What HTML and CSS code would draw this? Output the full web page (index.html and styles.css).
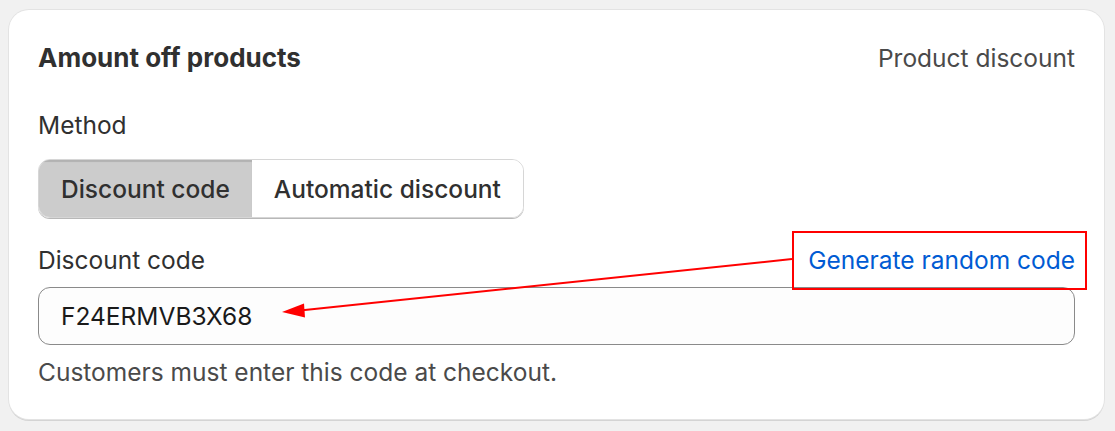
FILE: index.html
```html
<!doctype html>
<html>
<head>
    <meta charset="UTF-8">
    <title>Amount off products</title>
    <link rel="stylesheet" href="styles.css">
</head>
<body>
<div class="page">
    <div class="card">
        <div class="head">
            <h2 class="title">Amount off products</h2>
            <span class="kind">Product discount</span>
        </div>

        <div class="label">Method</div>
        <div class="segmented">
            <button class="seg seg-on">Discount code</button>
            <button class="seg">Automatic discount</button>
        </div>

        <div class="label-row">
            <label class="label" for="code">Discount code</label>
            <a class="link" href="#">Generate random code</a>
        </div>
        <input class="field" id="code" type="text" value="F24ERMVB3X68">
        <div class="help">Customers must enter this code at checkout.</div>
    </div>

    <!-- annotation -->
    <div class="mark"></div>
    <svg class="arrow" viewBox="0 0 1115 431" width="1115" height="431">
        <line x1="792" y1="259" x2="300" y2="310.5" stroke="#ff0000" stroke-width="2"/>
        <polygon points="282,312 304,303.5 305,317.5" fill="#ff0000"/>
    </svg>
</div>
</body>
</html>
```

FILE: styles.css
```css
* {
    margin: 0;
    padding: 0;
    box-sizing: border-box;
}

body {
    background: #f1f1f1;
    font-family: Inter, "Noto Sans", sans-serif;
    color: #303030;
    overflow: hidden;
}

.page {
    position: relative;
    width: 1115px;
    height: 431px;
    padding: 10px 11px 0 9px;
}

.card {
    height: 409px;
    background: #fff;
    border-radius: 20px;
    box-shadow: 0 0 0 1px #e3e3e3, 0 2px 0 #d4d4d4;
    padding: 33px 29px 0;
}

.head {
    display: flex;
    justify-content: space-between;
    align-items: center;
    height: 30px;
}

.title {
    font-size: 26px;
    font-weight: 650;
    line-height: 30px;
    color: #303030;
}

.kind {
    font-size: 24.5px;
    line-height: 30px;
    color: #4a4a4a;
}

.label {
    display: block;
    font-size: 24.5px;
    line-height: 30px;
    color: #303030;
}

.head + .label {
    margin-top: 37px;
}

.segmented {
    display: inline-flex;
    margin-top: 19px;
    height: 59px;
    border-radius: 12px;
    border: 1px solid #d6d6d6;
    box-shadow: 0 1px 0 #b8b8b8;
    overflow: hidden;
}

.seg {
    border: 0;
    background: #fff;
    font-family: inherit;
    font-size: 24.5px;
    font-weight: 450;
    color: #303030;
    padding: 0 22px;
}

.seg-on {
    background: #cccccc;
    box-shadow: inset 0 2px 1px #b2b2b2;
}

.label-row {
    display: flex;
    justify-content: space-between;
    align-items: center;
    margin-top: 27px;
    height: 30px;
}

.link {
    font-size: 24.5px;
    line-height: 30px;
    color: #005bd3;
    text-decoration: none;
}

.field {
    display: block;
    width: 100%;
    height: 58px;
    margin-top: 12px;
    border: 1px solid #8a8a8a;
    border-radius: 12px;
    background: #fdfdfd;
    padding: 0 22px;
    font-family: inherit;
    font-size: 24.5px;
    color: #1a1a1a;
    outline: none;
}

.help {
    margin-top: 12px;
    font-size: 24.5px;
    line-height: 30px;
    color: #4a4a4a;
}

.mark {
    position: absolute;
    left: 792px;
    top: 231px;
    width: 295px;
    height: 59px;
    border: 2px solid #ff0000;
}

.arrow {
    position: absolute;
    left: 0;
    top: 0;
    pointer-events: none;
}
```
